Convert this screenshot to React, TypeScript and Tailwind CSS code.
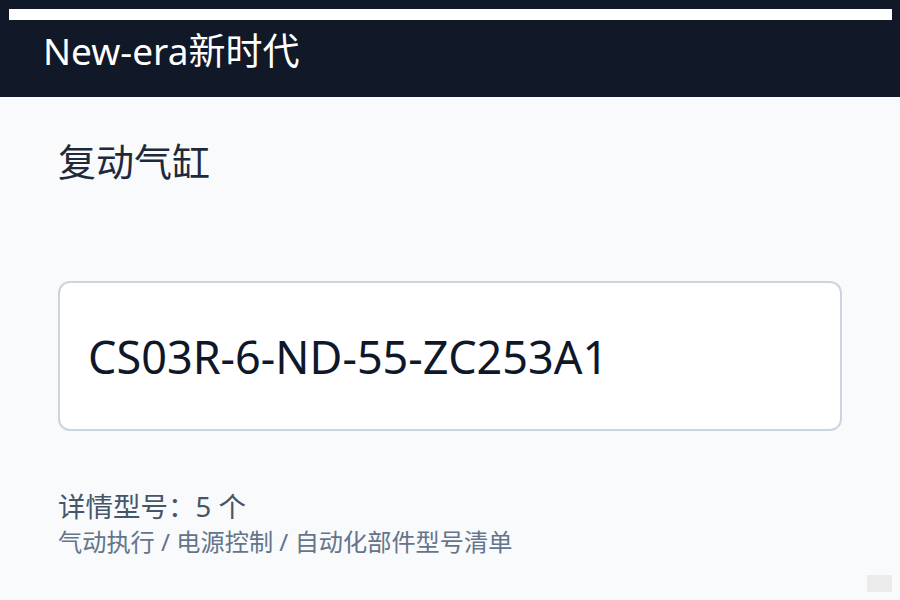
export default function App() {
  return (
    <div
      className="min-h-[600px] bg-[#f8fafc] text-[#0f172a]"
      style={{ fontFamily: '"Noto Sans", "Noto Sans CJK SC", sans-serif' }}
    >
      {/* header */}
      <header className="h-[97px] bg-[#111827] pt-[9px]">
        <div className="ml-[9px] mr-[8px] h-[11px] bg-white" />
        <h1 className="mt-[6px] pl-[43px] text-[37px] leading-[50px] text-white">New-era新时代</h1>
      </header>

      <main className="px-[58px] pt-[38px]">
        <h2 className="text-[38px] leading-[52px] text-[#1e293b]">复动气缸</h2>

        <div className="mt-[94px] flex h-[150px] items-center rounded-xl border-2 border-[#cbd5e1] bg-white pl-[28px]">
          <span className="text-[45px] leading-none text-[#0f172a]">CS03R-6-ND-55-ZC253A1</span>
        </div>

        <div className="mt-[57px] text-[27.5px] leading-[38px] text-[#475569]">详情型号：5 个</div>
        <div className="text-[24.2px] leading-[32px] text-[#64748b]">气动执行 / 电源控制 / 自动化部件型号清单</div>
      </main>

      <div className="fixed right-[8px] bottom-[8px] h-[17px] w-[25px] bg-[#ebebeb]" />
    </div>
  )
}
